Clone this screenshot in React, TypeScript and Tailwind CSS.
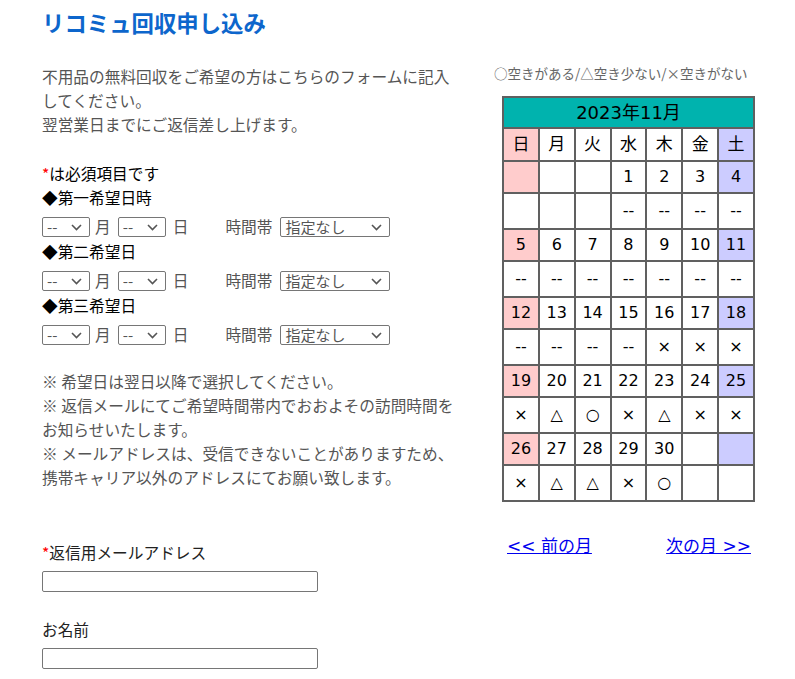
import { Fragment } from "react";
import type { ReactNode } from "react";

const jp = "font-['Noto_Sans_CJK_JP',sans-serif]";
const calFont = "font-['DejaVu_Sans','Noto_Sans_CJK_JP',sans-serif]";

type Cell = { label: string; bg?: "sun" | "sat" };

const weeks: { dates: Cell[]; marks: string[] }[] = [
  {
    dates: [{ label: "", bg: "sun" }, { label: "" }, { label: "" }, { label: "1" }, { label: "2" }, { label: "3" }, { label: "4", bg: "sat" }],
    marks: ["", "", "", "--", "--", "--", "--"],
  },
  {
    dates: [{ label: "5", bg: "sun" }, { label: "6" }, { label: "7" }, { label: "8" }, { label: "9" }, { label: "10" }, { label: "11", bg: "sat" }],
    marks: ["--", "--", "--", "--", "--", "--", "--"],
  },
  {
    dates: [{ label: "12", bg: "sun" }, { label: "13" }, { label: "14" }, { label: "15" }, { label: "16" }, { label: "17" }, { label: "18", bg: "sat" }],
    marks: ["--", "--", "--", "--", "×", "×", "×"],
  },
  {
    dates: [{ label: "19", bg: "sun" }, { label: "20" }, { label: "21" }, { label: "22" }, { label: "23" }, { label: "24" }, { label: "25", bg: "sat" }],
    marks: ["×", "△", "○", "×", "△", "×", "×"],
  },
  {
    dates: [{ label: "26", bg: "sun" }, { label: "27" }, { label: "28" }, { label: "29" }, { label: "30" }, { label: "" }, { label: "", bg: "sat" }],
    marks: ["×", "△", "△", "×", "○", "", ""],
  },
];

function bgClass(bg?: "sun" | "sat") {
  if (bg === "sun") return "bg-[#ffcccc]";
  if (bg === "sat") return "bg-[#ccccff]";
  return "bg-white";
}

function Select({ width, label }: { width: string; label: string }) {
  return (
    <div className={`relative h-[20px] ${width}`}>
      <select
        defaultValue=""
        className="h-full w-full appearance-none rounded-[2px] border border-[#767676] bg-white pl-[4px] text-[15px] leading-[18px] text-[#555]"
      >
        <option value="">{label}</option>
      </select>
      <svg
        className="pointer-events-none absolute right-[8px] top-[7px]"
        width="11"
        height="7"
        viewBox="0 0 11 7"
        fill="none"
      >
        <path d="M1 1l4.5 4.5L10 1" stroke="#555" strokeWidth="1.6" />
      </svg>
    </div>
  );
}

function DateRow({ title }: { title: ReactNode }) {
  return (
    <>
      <p className="h-[24px] leading-[24px] text-black">{title}</p>
      <div className="mt-[7px] mb-[3px] flex h-[20px] items-center leading-[20px] text-[#555]">
        <Select width="w-[48px]" label="--" />
        <span className="ml-[5px] mr-[7px]">月</span>
        <Select width="w-[48px]" label="--" />
        <span className="ml-[7px]">日</span>
        <span className="ml-[37px] mr-[8px]">時間帯</span>
        <Select width="w-[110px]" label="指定なし" />
      </div>
    </>
  );
}

function TextField() {
  return <input type="text" className="mt-[6px] block h-[21px] w-[276px] rounded-[2px] border border-[#767676] bg-white" />;
}

function Calendar() {
  const cell = "border border-[#606060] text-center align-middle p-0";
  return (
    <table className={`${calFont} ml-[8px] w-[253px] table-fixed border-separate border-spacing-0 border border-[#606060] text-[16px] text-black`}>
      <tbody>
        <tr>
          <td colSpan={7} className={`${cell} h-[31px] bg-[#00b3ae] text-[18px]`}>
            2023年11月
          </td>
        </tr>
        <tr>
          {["日", "月", "火", "水", "木", "金", "土"].map((d, i) => (
            <td key={d} className={`${cell} h-[33px] text-[17px] ${bgClass(i === 0 ? "sun" : i === 6 ? "sat" : undefined)}`}>
              {d}
            </td>
          ))}
        </tr>
        {weeks.map((w, wi) => (
          <Fragment key={wi}>
            <tr>
              {w.dates.map((c, i) => (
                <td key={i} className={`${cell} h-[32px] ${bgClass(c.bg)}`}>
                  {c.label}
                </td>
              ))}
            </tr>
            <tr>
              {w.marks.map((m, i) => (
                <td key={i} className={`${cell} h-[36px] bg-white`}>
                  {m}
                </td>
              ))}
            </tr>
          </Fragment>
        ))}
      </tbody>
    </table>
  );
}

export default function App() {
  return (
    <div className={`${jp} flex min-h-[679px] w-[795px] bg-white`}>
      <div className="ml-[42px] w-[418px] pt-[7px] text-[15.7px]">
        <h1 className="h-[30px] text-[22.4px] font-bold leading-[30px] text-[#0d66cc]">リコミュ回収申し込み</h1>

        <p className="mt-[28px] leading-[24px] text-[#555]">
          不用品の無料回収をご希望の方はこちらのフォームに記入してください。
          <br />
          翌営業日までにご返信差し上げます。
        </p>

        <p className="mt-[25px] h-[24px] leading-[24px] text-black">
          <span className="text-[#ff0000]">*</span>は必須項目です
        </p>
        <DateRow title="◆第一希望日時" />
        <DateRow title="◆第二希望日" />
        <DateRow title="◆第三希望日" />

        <div className="mt-[25px] leading-[24px] text-[#555]">
          <p>※ 希望日は翌日以降で選択してください。</p>
          <p>※ 返信メールにてご希望時間帯内でおおよその訪問時間をお知らせいたします。</p>
          <p>※ メールアドレスは、受信できないことがありますため、携帯キャリア以外のアドレスにてお願い致します。</p>
        </div>

        <p className="mt-[51px] h-[24px] leading-[24px] text-[#222]">
          <span className="text-[#ff0000]">*</span>返信用メールアドレス
        </p>
        <TextField />

        <p className="mt-[26px] h-[24px] leading-[24px] text-[#222]">お名前</p>
        <TextField />
      </div>

      <div className="ml-[34px] pt-[63px]">
        <p className="h-[20px] text-[13.5px] leading-[20px] text-[#666]">○空きがある/△空き少ない/×空きがない</p>
        <div className="mt-[13px]">
          <Calendar />
        </div>
        <div className={`${calFont} mt-[32px] flex w-[261px] justify-between pl-[13px] pr-[4px] text-[17px] leading-[24px]`}>
          <a href="#" className="text-[#0000ee] underline">
            &lt;&lt; 前の月
          </a>
          <a href="#" className="text-[#0000ee] underline">
            次の月 &gt;&gt;
          </a>
        </div>
      </div>
    </div>
  );
}
